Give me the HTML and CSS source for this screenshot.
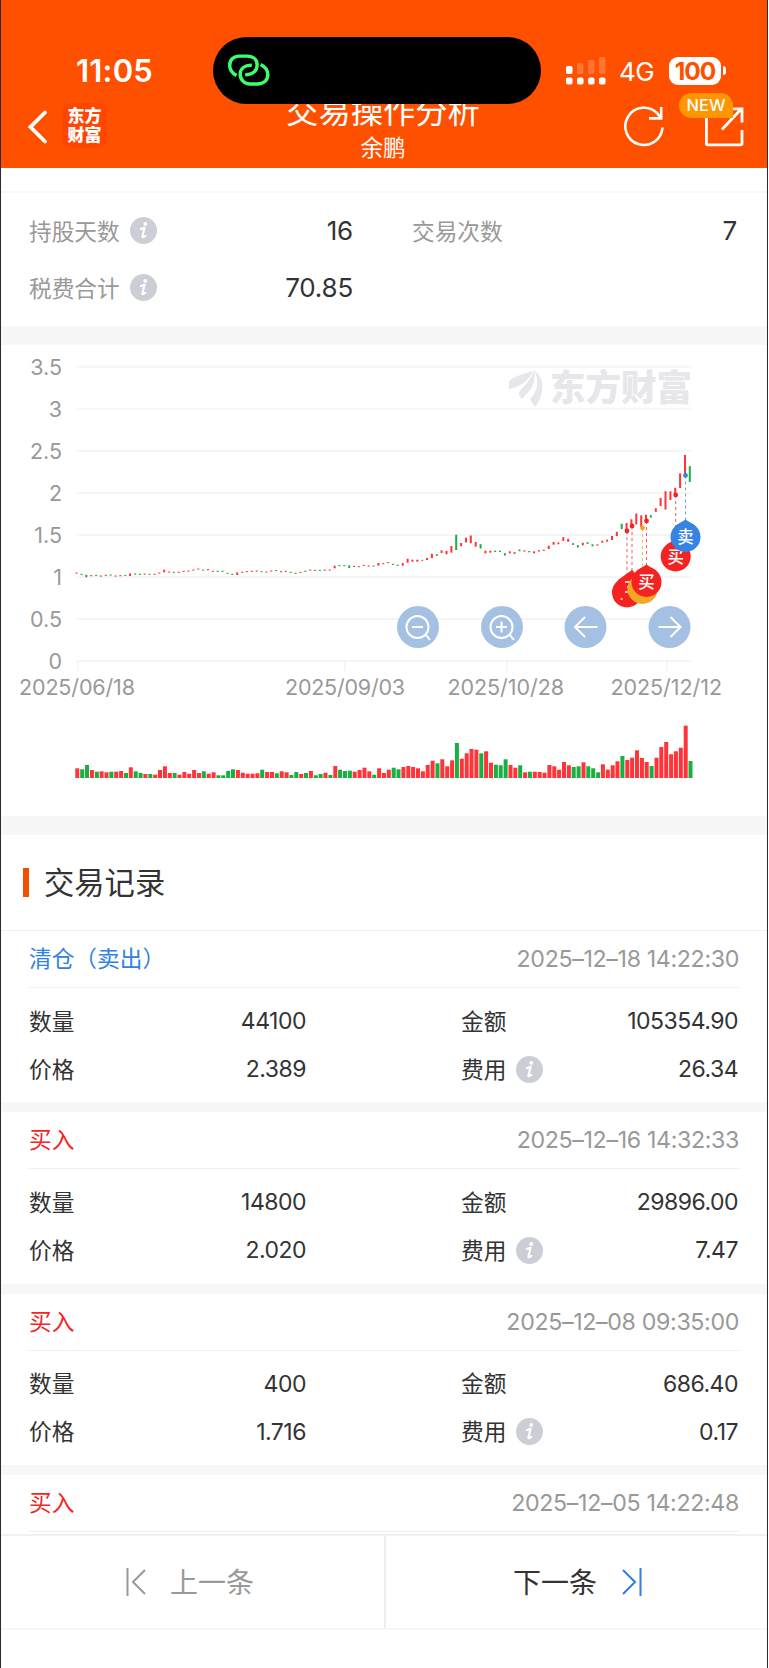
FILE: index.html
```html
<!DOCTYPE html>
<html lang="zh-CN">
<head>
<meta charset="utf-8">
<title>交易操作分析</title>
<link rel="stylesheet" href="styles.css">
</head>
<body>
<svg width="0" height="0" class="defs">
  <symbol id="info" viewBox="0 0 27 27"><circle cx="13.5" cy="13.5" r="13.5" fill="#cbced4"/><circle cx="15.3" cy="6.9" r="1.9" fill="#fff"/><path d="M10.8 11.9Q13.2 11.3 14.6 10.7L12.4 19.6Q12.2 21.2 15.4 18.9" fill="none" stroke="#fff" stroke-width="2.1" stroke-linecap="round" stroke-linejoin="round"/></symbol>
</svg>
<div class="app">
  <header class="header">
    <div class="status">
      <span class="clock">11:05</span>
      <div class="island">
        <svg width="42" height="33" viewBox="0 0 44 36" preserveAspectRatio="none" fill="none" stroke="#3dff6c" stroke-width="3.6"><path d="M8.9 23.5C3.6 20.5 1.8 17 1.8 12.5C1.8 6 6 2.3 12 2.3H20C27 2.3 30.5 6.5 30.5 12C30.5 18.5 26 22.5 18 22.8"/><path d="M25 12.2C17 12.2 12.8 16.5 12.8 22C12.8 28 17 32.7 23 32.7H31C37.5 32.7 41.7 28.5 41.7 22.5C41.7 17.5 39 14 34.2 11.5"/></svg>
      </div>
      <svg class="signal" width="40" height="28" viewBox="0 0 40 28" fill="#fff"><rect y="9" width="6.5" height="8" rx="1.8"/><g opacity=".2"><rect x="11" y="6" width="6.5" height="11" rx="1.8"/><rect x="22" y="3" width="6.5" height="14" rx="1.8"/><rect x="33" width="6.5" height="17" rx="1.8"/></g><rect y="20.5" width="6.5" height="7" rx="1.8"/><rect x="11" y="20.5" width="6.5" height="7" rx="1.8"/><rect x="22" y="20.5" width="6.5" height="7" rx="1.8"/><rect x="33" y="20.5" width="6.5" height="7" rx="1.8"/></svg>
      <span class="network">4G</span>
      <span class="battery">100</span><i class="battery-tip"></i>
    </div>
    <div class="nav">
      <svg class="back" width="20" height="34" viewBox="0 0 20 34" fill="none" stroke="#fff" stroke-width="3.8" stroke-linecap="round"><path d="M17 2.5L2.5 17L17 31.5"/></svg>
      <div class="brand"><span>东方</span><span>财富</span></div>
      <div class="titles"><h1>交易操作分析</h1><p>余鹏</p></div>
      <svg class="refresh" width="42" height="42" viewBox="0 0 42 42" fill="none" stroke="#fff" stroke-width="2.6"><path d="M39.5 22.5A18.6 18.6 0 1 1 34.4 8.5L38 13"/><path d="M38.2 2V13.4H26"/></svg>
      <div class="share">
        <svg width="42" height="42" viewBox="0 0 42 42" fill="none" stroke="#fff" stroke-width="2.8"><path d="M2.4 9V37.5Q2.4 38.8 3.7 38.8H36.5Q38 38.8 38 37.5V24"/><path d="M18 23.5L37.2 3M26 2.8H38V16.5"/></svg>
        <span class="badge">NEW</span>
      </div>
    </div>
  </header>

  <section class="summary">
    <div class="stat"><span class="label">持股天数</span><svg class="info"><use href="#info"/></svg><b>16</b></div>
    <div class="stat"><span class="label">交易次数</span><b>7</b></div>
    <div class="stat"><span class="label">税费合计</span><svg class="info"><use href="#info"/></svg><b>70.85</b></div>
  </section>

  <section class="chart">
    <svg id="plot" width="766" height="471" viewBox="1 345 766 471"></svg>
  </section>

  <section class="records">
    <h2><span>交易记录</span></h2>
    <article class="record">
      <div class="head"><span class="sell">清仓（卖出）</span><time>2025–12–18 14:22:30</time></div>
      <div class="grid"><span>数量</span><b>44100</b><span class="second">金额</span><b>105354.90</b><span>价格</span><b>2.389</b><span class="second">费用<svg class="info"><use href="#info"/></svg></span><b>26.34</b></div>
    </article>
    <article class="record">
      <div class="head"><span class="buy">买入</span><time>2025–12–16 14:32:33</time></div>
      <div class="grid"><span>数量</span><b>14800</b><span class="second">金额</span><b>29896.00</b><span>价格</span><b>2.020</b><span class="second">费用<svg class="info"><use href="#info"/></svg></span><b>7.47</b></div>
    </article>
    <article class="record">
      <div class="head"><span class="buy">买入</span><time>2025–12–08 09:35:00</time></div>
      <div class="grid"><span>数量</span><b>400</b><span class="second">金额</span><b>686.40</b><span>价格</span><b>1.716</b><span class="second">费用<svg class="info"><use href="#info"/></svg></span><b>0.17</b></div>
    </article>
    <article class="record last">
      <div class="head"><span class="buy">买入</span><time>2025–12–05 14:22:48</time></div>
    </article>
  </section>

  <footer class="pager">
    <div class="prev"><svg width="20" height="28" viewBox="0 0 20 28" fill="none" stroke="#999" stroke-width="2"><path d="M1.5 0V28M19 2L7 14L19 26"/></svg><span>上一条</span></div>
    <div class="next"><span>下一条</span><svg width="20" height="28" viewBox="0 0 20 28" fill="none" stroke="#2f7de1" stroke-width="2"><path d="M18.5 0V28M1 2L13 14L1 26"/></svg></div>
  </footer>
</div>
<script src="chart.js"></script>
</body>
</html>
```
FILE: styles.css
```css
* { box-sizing: border-box; }
body { margin: 0; background: #fff; color: #333; font-family: Inter, "Noto Sans CJK SC", sans-serif; }
h1, h2, p { margin: 0; font-weight: 400; }
b { font-weight: 400; }
svg { display: block; flex: none; }
.defs { position: absolute; }
.app { width: 768px; height: 1668px; border-left: 1px solid #2b2b2b; border-right: 1px solid #2b2b2b; overflow: hidden; background: #fff; }
.info { width: 27px; height: 27px; }

.header { height: 168px; padding-top: 37px; background: #ff5000; color: #fff; }
.status { position: relative; z-index: 1; display: flex; align-items: center; height: 67px; }
.status > * { flex: none; }
.clock { width: 212px; padding-left: 75px; font-size: 31px; font-weight: 600; letter-spacing: .2px; line-height: 36px; }
.island { width: 328px; height: 67px; padding: 17px 0 0 15px; border-radius: 33.5px; background: #000; }
.signal { margin-left: 25px; }
.network { width: 63px; padding-left: 13px; font-size: 26px; letter-spacing: -.5px; line-height: 36px; margin-top: 2px; }
.battery { width: 52px; height: 28px; border-radius: 9px; background: #fff; color: #ff5000; font-size: 24.5px; font-weight: 700; letter-spacing: -1px; line-height: 28px; text-align: center; }
.battery-tip { width: 3px; height: 9px; margin-left: 2px; border-radius: 0 4px 4px 0; background: #fff; }
.nav { display: flex; align-items: flex-start; height: 76px; margin-top: -12px; }
.back { margin: 18px 0 0 27px; }
.brand { display: flex; flex-direction: column; align-items: center; width: 45px; height: 45px; margin: 11px 0 0 14px; padding-top: 4px; border-radius: 9px; background: #ff4600; font-size: 17px; font-weight: 900; line-height: 19px; }
.titles { width: 270px; margin: -3px 0 0 141px; text-align: center; }
.titles h1 { height: 45px; font-size: 32.3px; line-height: 45px; white-space: nowrap; }
.titles p { font-size: 22.6px; line-height: 28px; }
.refresh { margin: 13px 0 0 105px; }
.share { position: relative; margin: 14px 0 0 39px; }
.badge { position: absolute; left: -25px; top: -13px; width: 54px; height: 25px; border-radius: 13px 13px 0 13px; background: #ff9500; font-size: 16.5px; font-weight: 500; line-height: 25px; text-align: center; }

.summary { display: grid; grid-template-columns: 324px 325px; column-gap: 59px; height: 135px; margin-top: 23px; padding: 9px 28px 0; border-top: 2px solid #f7f7f7; align-content: start; }
.stat { display: flex; align-items: center; height: 57px; font-size: 22.7px; color: #999; }
.stat .label { margin-top: -1px; }
.stat .info { margin-left: 10px; }
.stat b { margin-left: auto; color: #333; font-size: 26px; letter-spacing: -.2px; }

.chart { height: 509px; border-top: 19px solid #f7f7f7; border-bottom: 19px solid #f7f7f7; }
.chart .axis { fill: #999; font-size: 21.5px; }
.chart .flag { fill: #fff; font-size: 16.5px; font-weight: 500; text-anchor: middle; }
.chart .mark { fill: #e6e6eb; font-size: 36px; font-weight: 900; }
.grid-line { stroke: #f5f5f5; stroke-width: 2; }

.records { height: 699px; overflow: hidden; }
.records h2 { display: flex; align-items: center; height: 96px; padding-left: 22px; border-bottom: 1px solid #eee; font-size: 30.3px; }
.records h2::before { content: ""; width: 6px; height: 29px; margin-right: 15px; background: #f05000; }
.records h2 span { margin-top: -3px; }
.record { height: 181.4px; padding: 0 28px; border-bottom: 10px solid #f7f7f7; }
.record .head { display: flex; align-items: center; justify-content: space-between; height: 57px; border-bottom: 1px solid #eee; font-size: 22.7px; }
.head span { margin-top: -3px; }
.head time { color: #999; font-size: 23.2px; letter-spacing: -.35px; }
.sell { color: #2f80e8; }
.buy { color: #f42525; }
.record .grid { display: grid; grid-template-columns: 138px 139px 286px 146px; grid-auto-rows: 48px; align-items: center; padding-top: 9px; font-size: 22.7px; }
.grid span { margin-top: -2px; }
.grid b { text-align: right; font-size: 23px; letter-spacing: -.5px; }
.grid .second { display: flex; align-items: center; padding-left: 155px; }
.second .info { margin: 2px 0 0 10px; }

.pager { display: grid; grid-template-columns: 385px 1fr; height: 96px; border-top: 2px solid #f1f1f1; border-bottom: 2px solid #f7f7f7; background: #fff; font-size: 28px; }
.pager div { display: flex; align-items: center; }
.pager span { margin-top: -2px; }
.pager .prev { padding-left: 125px; border-right: 2px solid #eee; color: #999; gap: 24px; }
.pager .next { padding-left: 127px; gap: 25px; }
```
FILE: chart.js
```js
const plot = document.getElementById('plot');
const RED = '#ff3338', GREEN = '#18b043', FLAG_RED = '#f52222', GOLD = '#f5a623', BLUE = '#3583e3';
let out = '';

// Price grid and axis labels
['3.5', '3', '2.5', '2', '1.5', '1', '0.5', '0'].forEach((label, i) => {
  const y = 366.8 + i * 42.03;
  out += `<path class="grid-line" d="M77 ${y}H691"/><text class="axis" x="62" y="${y + 8}" text-anchor="end">${label}</text>`;
});
[[77.8, 19, 116, '2025/06/18'], [344.8, 285, 120, '2025/09/03'], [507, 447.5, 116.5, '2025/10/28'], [667, 610.5, 111.5, '2025/12/12']].forEach(([tick, x, w, date]) => {
  out += `<path class="grid-line" d="M${tick} 661V671"/><text class="axis" x="${x}" y="695" textLength="${w}">${date}</text>`;
});

// Watermark
out += '<path fill="#e6e6eb" d="M509 382Q509 378 533 371Q526 386 509 389ZM519 395C519 388 530 384 534 370C537 386 528 392 522 399ZM530 399C540 389 538 378 534 370C547 380 543 397 535 407Z"/><text class="mark" x="550" y="401" textLength="142" lengthAdjust="spacingAndGlyphs">东方财富</text>';

const step = 4.867;

// Candles: direction, centre, height
const early = 'R669 G673 G678 R677 G676 R678 R676 G675 R678 R677 G676 R674 G672 G673 R672 G673 R673 R669 R663 R666 G667 R667 R664 R663 R660 R657 G660 R659 R664 G664 G664 G670 G673 R671 R667 R665 R664 R663 G665 R666 R663 G662 R665 R664 G667 G670 R667 G664 R660 G661 G661 R660 R660 R651 G647 G647 G650 R649 R650 R646 R648 G648 R643 R641 R638 G643 G646'
  .split(' ').map((s, i) => [s[0], s.slice(1) / 3 + 350, [2, 11, 18, 33, 53, 56, 62].includes(i) ? 2.6 : 1.1]);
const middle = 'R253,8 R242,12 R242,6 R242,6 R241,3 R237,6 R228,13 G225,5 R215,8 R218,10 R208,20 G187,46 R194,10 R180,14 R178,23 R193,14 G199,13 R216,8 R215,6 G214,4 G214,4 G223,7 R217,6 R219,5 G211,5 R213,4 G215,4 R217,6 R213,4 R211,4 R202,10 R190,8 R190,5 R177,11 R181,9 G192,5 G199,7 R192,8 G189,5 G196,6 R195,4 R185,6 R182,6 R174,12'
  .split(' ').map(s => { const [y, h] = s.slice(1).split(','); return [s[0], y / 3 + 480, h / 3]; });
const late = 'R552,13 G529,16 R532,26 R518,20 R507,33 R514,36 R503,17 G499,7 R480,11 R456,24 R451,55 R437,26 R424,21 R392,44 R345,60 G372,47'
  .split(' ').map(s => { const [y, h] = s.slice(1).split(','); return [s[0], y / 3 + 350, h / 3]; });
early.concat(middle, late).forEach(([d, y, h], i) => {
  out += `<rect x="${(75.6 + i * step).toFixed(1)}" y="${(y - h / 2).toFixed(1)}" width="2" height="${h.toFixed(1)}" fill="${d === 'R' ? RED : GREEN}"/>`;
});

// Volume bars
'R29 G26 G39 R24 G19 R20 R17 G19 R19 R21 G15 R32 G20 G15 R12 G12 R10 R24 R35 R15 G15 R10 R18 R13 R24 R15 G20 R13 R17 G8 G8 G21 G26 R24 R16 R13 R13 R14 G25 R18 R18 G14 R20 R17 G9 G18 R12 G15 R21 G8 G12 R16 G9 R36 G25 G21 G22 R19 R24 R31 R20 G10 R29 R15 R25 G31 G26 R33 R36 R33 R29 R20 R39 R52 G44 R56 R35 R53 G105 R58 R74 R87 R85 G74 R80 R46 G40 G38 G56 R39 R31 G38 R17 G19 R19 R18 R16 R39 R35 R25 R48 R38 G33 G35 R47 G35 G29 G17 R41 R25 R38 R50 G66 R54 R61 R83 R60 R48 G36 R61 R93 R108 R71 R80 R91 R157 G51'
  .split(' ').forEach((s, i) => {
    const h = s.slice(1) / 3;
    out += `<rect x="${(75.3 + i * step).toFixed(1)}" y="${(778 - h).toFixed(1)}" width="4" height="${h.toFixed(1)}" fill="${s[0] === 'R' ? RED : GREEN}"/>`;
  });

// Zoom and pan buttons
const icons = [
  'M8 8L12 13M-6 0H5', 'M8 8L12 13M-6 0H5M-.5 -5.5V5.5', 'M12 0H-10M-.5 -10L-10.5 0L-.5 10', 'M-11 0H11M1 -10L11 0L1 10'
];
[418, 502, 585.5, 669.5].forEach((x, i) => {
  out += `<g transform="translate(${x} 627)" fill="none" stroke="#fff" stroke-width="2"><circle r="21" fill="#a4c1e4" stroke="none"/>${i < 2 ? '<circle cx="-.5" r="11"/>' : ''}<path d="${icons[i]}"/></g>`;
});

// Trade flags: x, price point, flag centre, colour, text
[[627, 531, 592.5, FLAG_RED, '买'], [632, 526, 586, FLAG_RED, '买'], [642.5, 528, 589, GOLD, 'T'], [646.5, 521, 582, FLAG_RED, '买'], [675.7, 495, 556.5, FLAG_RED, '买'], [685.5, 475.5, 537, BLUE, '卖']].forEach(([x, p, y, color, text], i) => {
  out += `<path d="M${x} ${p}V${y - 15}" stroke="${color}" stroke-dasharray="3 3" opacity=".75"/><circle cx="${x}" cy="${p}" r="2.4" fill="${color}"/>`;
  if (i === 1) out += `<path d="M618 580L632 570L640 578V592L624 600Z" fill="${color}"/><path d="M625 582H630M627 587H630M625 592H630M620.5 599H622.5" stroke="#fff" stroke-width="1.3"/>`;
  else out += `<circle cx="${x}" cy="${y}" r="15" fill="${color}"/><path d="M${x - 10} ${y - 11}L${x} ${y - 17.5}L${x + 10} ${y - 11}Z" fill="${color}"/>`;
  if (i > 2) out += `<text class="flag" x="${x}" y="${y + 6}">${text}</text>`;
});
plot.innerHTML = out;
```
